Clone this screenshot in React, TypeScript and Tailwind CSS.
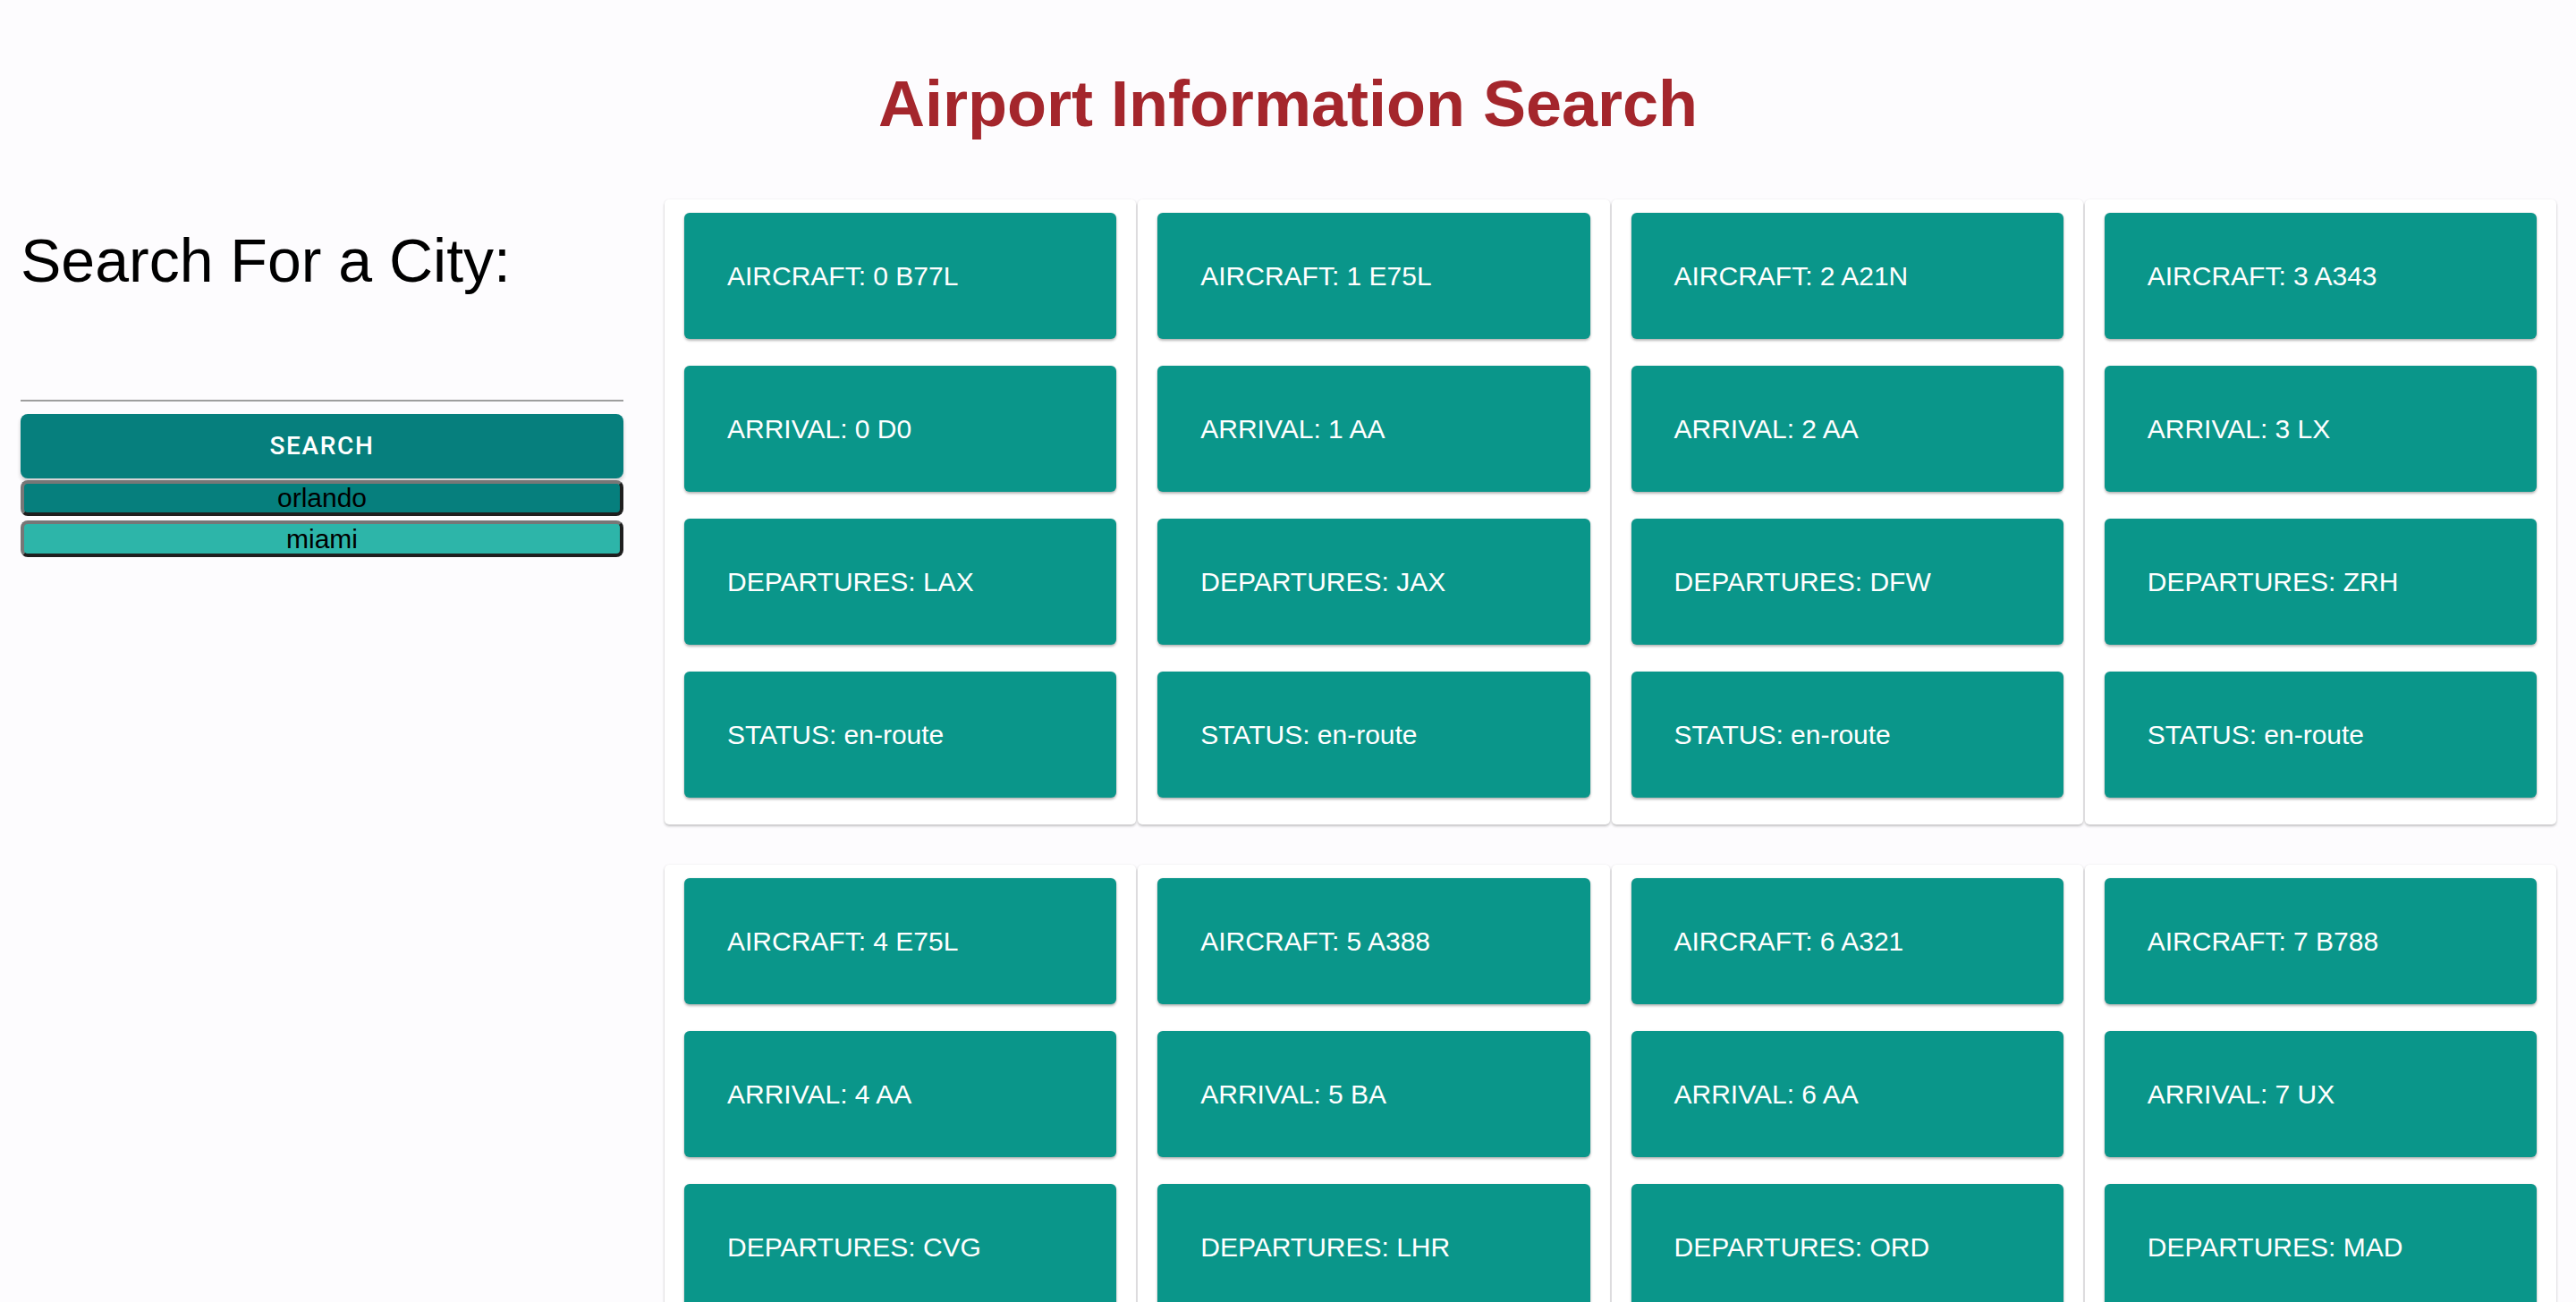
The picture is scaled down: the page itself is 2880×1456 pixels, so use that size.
import React from "react"

type Flight = { aircraft: string; arrival: string; departure: string; status: string }

const flights: Flight[] = [
  { aircraft: "0 B77L", arrival: "0 D0", departure: "LAX", status: "en-route" },
  { aircraft: "1 E75L", arrival: "1 AA", departure: "JAX", status: "en-route" },
  { aircraft: "2 A21N", arrival: "2 AA", departure: "DFW", status: "en-route" },
  { aircraft: "3 A343", arrival: "3 LX", departure: "ZRH", status: "en-route" },
  { aircraft: "4 E75L", arrival: "4 AA", departure: "CVG", status: "en-route" },
  { aircraft: "5 A388", arrival: "5 BA", departure: "LHR", status: "en-route" },
  { aircraft: "6 A321", arrival: "6 AA", departure: "ORD", status: "en-route" },
  { aircraft: "7 B788", arrival: "7 UX", departure: "MAD", status: "en-route" },
]

function Tile({ text }: { text: string }) {
  return (
    <div className="h-[141px] flex items-center pl-[48px] bg-[#0a968a] text-white text-[30px] rounded-[6px] shadow-[0_2px_3px_rgba(0,0,0,0.28),0_0_2px_rgba(0,0,0,0.1)]">
      {text}
    </div>
  )
}

function FlightCard({ f }: { f: Flight }) {
  return (
    <div className="bg-white rounded-[5px] px-[22px] pt-[15px] pb-[30px] flex flex-col gap-[30px] shadow-[0_2px_3px_rgba(0,0,0,0.22),0_0_2px_rgba(0,0,0,0.08)]">
      <Tile text={`AIRCRAFT: ${f.aircraft}`} />
      <Tile text={`ARRIVAL: ${f.arrival}`} />
      <Tile text={`DEPARTURES: ${f.departure}`} />
      <Tile text={`STATUS: ${f.status}`} />
    </div>
  )
}

export default function App() {
  const rows = [flights.slice(0, 4), flights.slice(4, 8)]
  return (
    <div className="min-h-screen bg-[#fdfcfe] font-['Liberation_Sans',Arial,sans-serif]">
      <h1 className="pt-[76px] text-center text-[72px] leading-[80px] font-bold text-[#a4262c]">
        Airport Information Search
      </h1>

      <div className="mt-[67px] flex">
        {/* search panel */}
        <div className="w-[720px] shrink-0 px-[23px]">
          <h4 className="mt-[26px] text-[68px] leading-[84px] text-black">Search For a City:</h4>
          <div className="h-[116px] border-b-2 border-[#9e9e9e]" />
          <button className="mt-[14px] w-full h-[72px] rounded-[8px] bg-[#067f7d] text-white text-[28px] tracking-[0.06em] font-['Roboto',sans-serif] font-medium shadow-[0_3px_4px_rgba(0,0,0,0.2)]">
            SEARCH
          </button>
          <button className="mt-[2px] w-full h-[40px] rounded-[8px] border-[4px] border-t-[#777] border-l-[#777] border-b-[#1f1f1f] border-r-[#1f1f1f] bg-[#067f7d] text-black text-[30px] leading-none">
            orlando
          </button>
          <button className="mt-[5px] w-full h-[41px] rounded-[8px] border-[4px] border-t-[#777] border-l-[#777] border-b-[#1f1f1f] border-r-[#1f1f1f] bg-[#2db5a9] text-black text-[30px] leading-none">
            miami
          </button>
        </div>

        {/* results */}
        <div className="flex-1 pl-[23px] pr-[22px] flex flex-col gap-[45px]">
          {rows.map((row, i) => (
            <div key={i} className="grid grid-cols-4 gap-[2px]">
              {row.map(f => (
                <FlightCard key={f.aircraft} f={f} />
              ))}
            </div>
          ))}
        </div>
      </div>
    </div>
  )
}
